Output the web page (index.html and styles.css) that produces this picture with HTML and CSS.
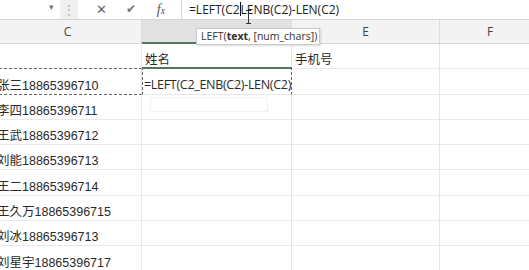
FILE: index.html
```html
<!DOCTYPE html>
<html lang="zh">
<head>
    <meta charset="UTF-8">
    <title>Excel</title>
    <link rel="stylesheet" href="styles.css">
</head>
<body>
<div class="bar">
    <div class="namebox"><span class="drop">&#9662;</span></div>
    <div class="grip">&#8942;</div>
    <div class="btns">
        <span class="btn x">&#10005;</span>
        <span class="btn ok">&#10004;</span>
        <span class="btn fx"><i>f</i><i class="sub">x</i></span>
    </div>
    <div class="input">=LEFT(C2<span class="caret"></span>LENB(C2)-LEN(C2)</div>
</div>
<div class="sheet">
    <div class="hd">C</div>
    <div class="hd hd-on"></div>
    <div class="hd">E</div>
    <div class="hd last">F</div>

    <div class="c"></div>
    <div class="c">姓名</div>
    <div class="c">手机号</div>
    <div class="c last"></div>

    <div class="c copy">张三18865396710</div>
    <div class="c edit">=LEFT(C2_ENB(C2)-LEN(C2)</div>
    <div class="c"></div>
    <div class="c last"></div>

    <div class="c">李四18865396711</div>
    <div class="c"></div>
    <div class="c"></div>
    <div class="c last"></div>

    <div class="c">王武18865396712</div>
    <div class="c"></div>
    <div class="c"></div>
    <div class="c last"></div>

    <div class="c">刘能18865396713</div>
    <div class="c"></div>
    <div class="c"></div>
    <div class="c last"></div>

    <div class="c">王二18865396714</div>
    <div class="c"></div>
    <div class="c"></div>
    <div class="c last"></div>

    <div class="c">王久万18865396715</div>
    <div class="c"></div>
    <div class="c"></div>
    <div class="c last"></div>

    <div class="c">刘冰18865396713</div>
    <div class="c"></div>
    <div class="c"></div>
    <div class="c last"></div>

    <div class="c">刘星宇18865396717</div>
    <div class="c"></div>
    <div class="c"></div>
    <div class="c last"></div>
</div>
<!-- 公式提示 -->
<div class="tip">LEFT(<b>text</b>, [num_chars])</div>
<div class="ghost"></div>
<div class="ibeam"></div>
</body>
</html>
```

FILE: styles.css
```css
* {
    padding: 0;
    margin: 0;
    box-sizing: border-box;
}

body {
    width: 529px;
    height: 270px;
    overflow: hidden;
    background: #fff;
    font-family: "Liberation Sans", "Noto Sans CJK SC", sans-serif;
    color: #222;
    position: relative;
}

.bar {
    height: 20px;
    display: flex;
    border-bottom: 1px solid #d4d4d4;
    background: #fff;
}

.namebox {
    width: 60px;
    position: relative;
}

.drop {
    position: absolute;
    right: 6px;
    top: 2px;
    font-size: 9px;
    color: #777;
}

.grip {
    width: 18px;
    background: #f0f0f0;
    color: #aaa;
    font-size: 12px;
    text-align: center;
    line-height: 20px;
}

.btns {
    display: flex;
    width: 104px;
    padding-left: 15px;
    gap: 14px;
    border-right: 1px solid #d8d8d8;
}

.btn {
    width: 16px;
    text-align: center;
    line-height: 19px;
    color: #666;
}

.x {
    font-size: 13px;
}

.ok {
    font-size: 12px;
    color: #777;
}

.fx {
    font-family: "Liberation Serif", serif;
    font-size: 14px;
    color: #555;
}

.fx .sub {
    font-size: 10px;
}

.input {
    flex: 1;
    padding-left: 7px;
    font-family: "Open Sans", sans-serif;
    font-size: 12px;
    line-height: 19px;
    color: #222;
}

.caret {
    display: inline-block;
    width: 1px;
    height: 14px;
    background: #111;
    vertical-align: -2px;
}

.sheet {
    margin-left: -6px;
    display: grid;
    grid-template-columns: 148px 150px 148px 100px;
    grid-template-rows: 24px repeat(9, 25.3px);
}

.hd {
    background: #f3f3f3;
    border-right: 1px solid #dcdcdc;
    border-bottom: 1px solid #d6d6d6;
    text-align: center;
    font-family: "Open Sans", sans-serif;
    font-size: 12px;
    line-height: 23px;
    color: #444;
}

.hd-on {
    background: #e2e2e2;
    border-bottom: 2px solid #53775d;
}

.c {
    border-right: 1px solid #e6e6e6;
    border-bottom: 1px solid #e9e9e9;
    font-size: 12.5px;
    padding: 0 0 0 3px;
    display: flex;
    align-items: flex-end;
    white-space: nowrap;
    color: #2a2a2a;
}

.last {
    border-right: 0;
}

.copy {
    border-top: 1px dashed #666;
    border-bottom: 1px dashed #666;
    margin-top: -1px;
}

.edit {
    border-top: 2px solid #53775d;
    border-left: 1px dashed #666;
    border-right: 1px dashed #666;
    margin-top: -2px;
    font-family: "Open Sans", sans-serif;
    font-size: 12.5px;
    letter-spacing: -0.3px;
    padding-left: 1px;
    padding-bottom: 1px;
}

.tip {
    position: absolute;
    left: 196px;
    top: 28px;
    width: 124px;
    height: 17px;
    background: #fff;
    border: 1px solid #c9c9c9;
    font-family: "Open Sans", sans-serif;
    font-size: 10.5px;
    line-height: 15px;
    padding-left: 4px;
    white-space: nowrap;
    color: #333;
    box-shadow: 1px 1px 2px rgba(0, 0, 0, 0.15);
}

.ghost {
    position: absolute;
    left: 150px;
    top: 97px;
    width: 118px;
    height: 15px;
    border: 1px solid #f1f1f1;
}

.ibeam {
    position: absolute;
    left: 246px;
    top: 10px;
    width: 5px;
    height: 14px;
    border-top: 1px solid #333;
    border-bottom: 1px solid #333;
}

.ibeam::after {
    content: "";
    position: absolute;
    left: 2px;
    top: 0;
    width: 1px;
    height: 12px;
    background: #333;
}
```
